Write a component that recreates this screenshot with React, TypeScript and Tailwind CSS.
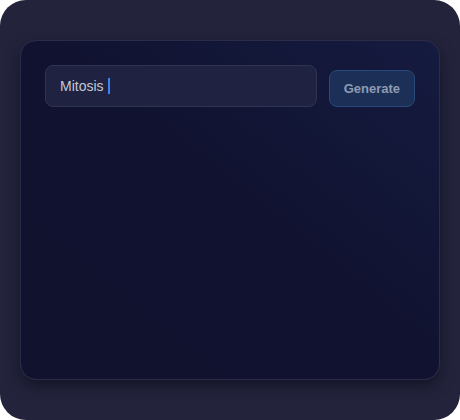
import React from 'react';

const App: React.FC = () => {
  return (
    <div className="w-[460px] h-[420px] bg-white" style={{ fontFamily: '"Liberation Sans", Arial, sans-serif' }}>
      <div className="w-full h-full rounded-[26px] bg-[#23233b] px-5 py-10">
        <div className="h-full rounded-[16px] border border-[#2c2c48] bg-gradient-to-bl from-[#151b40] via-[#10122f] to-[#11122e] shadow-[0_6px_14px_rgba(10,10,25,0.55)] p-6">
          <div className="flex items-start gap-3">
            <div className="flex-1 h-[42px] rounded-[8px] border border-[#2f3452] bg-[#1f2240] flex items-center px-[14px]">
              <span className="text-[14px] leading-none text-[#c3c7da]">Mitosis</span>
              <span className="ml-[4px] w-[2px] h-[16px] bg-[#3b82f6]" />
            </div>
            <button className="mt-[5px] h-[37px] px-[14px] rounded-[8px] border border-[#26487a] bg-[#1b2f57] text-[13px] font-bold text-[#8e9bb2]">
              Generate
            </button>
          </div>
        </div>
      </div>
    </div>
  );
};

export default App;
